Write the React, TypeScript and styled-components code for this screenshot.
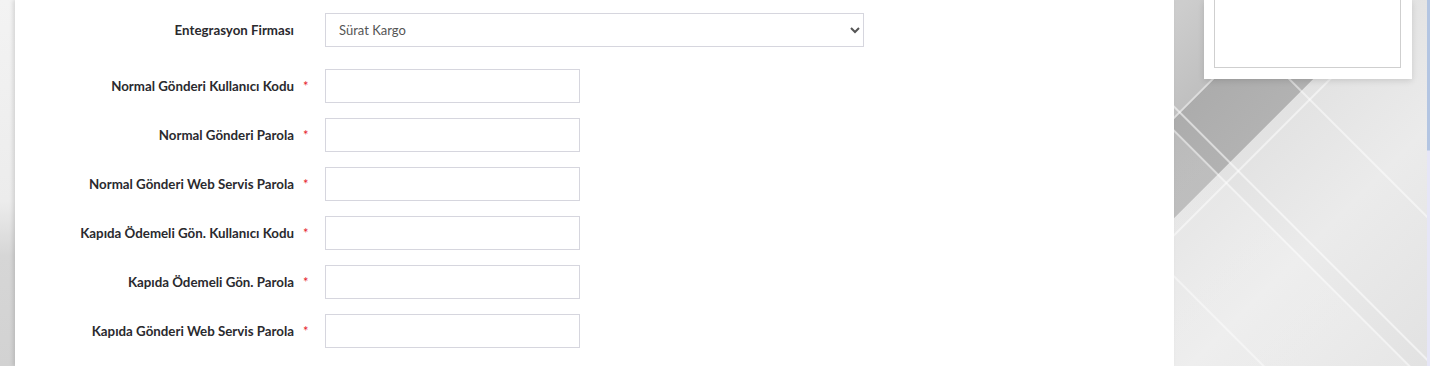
import React from "react";
import styled, { createGlobalStyle } from "styled-components";

const GlobalStyle = createGlobalStyle`
  html, body {
    margin: 0;
    padding: 0;
    overflow: hidden;
  }
  body {
    font-family: Lato, "Open Sans", sans-serif;
  }
`;

// decorative diagonal background: 135deg stripes follow x+y, 45deg stripes follow y-x
const Page = styled.div`
  display: flex;
  align-items: flex-start;
  height: 366px;
  width: 1430px;
  background-color: #e4e4e4;
  background-image:
    linear-gradient(45deg,
      transparent 892px, rgba(255,255,255,0.45) 893px, rgba(255,255,255,0.45) 894px, transparent 895px,
      transparent 995px, rgba(255,255,255,0.55) 996px, rgba(255,255,255,0.55) 997px, transparent 998px,
      transparent 1012px, rgba(255,255,255,0.55) 1013px, rgba(255,255,255,0.55) 1014px, transparent 1015px,
      transparent 1113px, rgba(255,255,255,0.5) 1114px, rgba(255,255,255,0.5) 1115px, transparent 1116px),
    linear-gradient(135deg,
      transparent 912px, rgba(255,255,255,0.6) 913px, rgba(255,255,255,0.6) 914px, transparent 915px,
      transparent 995px, rgba(255,255,255,0.5) 996px, rgba(255,255,255,0.5) 997px, transparent 998px),
    linear-gradient(45deg,
      rgba(255,255,255,0.16) 0, rgba(255,255,255,0.16) 995px, transparent 996px),
    linear-gradient(135deg,
      #d8d8d8 0, #cdcdcd 840px, #c0c0c0 912px, #acacac 913px, #b2b2b2 984px,
      #e2e2e2 985px, #ebebeb 1100px, #e0e0e0 1300px);
  background-size: 100% 100%;
`;

const Gutter = styled.div`
  flex: none;
  width: 15px;
  height: 366px;
  background: linear-gradient(180deg, #f3f3f3 0%, #ececec 55%, #d6d6d6 70%, #d2d2d2 100%);
`;

const Main = styled.main`
  flex: none;
  width: 1159px;
  height: 366px;
  background: #fff;
  box-shadow: -2px 0 4px rgba(0, 0, 0, 0.12);
  box-sizing: border-box;
  padding-top: 13px;
`;

const Form = styled.form`
  display: flex;
  flex-direction: column;
`;

const Row = styled.div<{ $gap: number }>`
  display: flex;
  align-items: center;
  margin-bottom: ${(p) => p.$gap}px;
`;

const Label = styled.label`
  width: 279px;
  text-align: right;
  font-family: Lato, "Open Sans", sans-serif;
  font-weight: 700;
  font-size: 13.3px;
  color: #2a2a2e;
`;

const Star = styled.span<{ $hidden?: boolean }>`
  width: 22px;
  padding-left: 9px;
  box-sizing: border-box;
  flex: none;
  color: #e5202b;
  font-size: 13px;
  font-family: Lato, sans-serif;
  margin-right: 9px;
  visibility: ${(p) => (p.$hidden ? "hidden" : "visible")};
`;

const TextInput = styled.input`
  box-sizing: border-box;
  width: 255px;
  height: 34px;
  border: 1px solid #d6d6de;
  border-radius: 0;
  background: #fff;
  outline: none;
`;

const Select = styled.select`
  box-sizing: border-box;
  width: 539px;
  height: 34px;
  border: 1px solid #d6d6de;
  border-radius: 0;
  background: #fff;
  padding: 0 8px 0 9px;
  font-family: Lato, "Open Sans", sans-serif;
  font-size: 13px;
  color: #555;
  outline: none;
`;

const Aside = styled.aside`
  flex: none;
  margin-left: 30px;
  width: 208px;
  height: 79px;
  box-sizing: border-box;
  padding: 0 11px 11px 10px;
  background: #fff;
  box-shadow: 0 2px 6px rgba(0, 0, 0, 0.12);
`;

const PreviewBox = styled.div`
  height: 100%;
  box-sizing: border-box;
  border: 1px solid #cfcfcf;
  border-top: none;
`;

const Scrollbar = styled.div`
  flex: none;
  margin-left: auto;
  width: 3px;
  height: 366px;
  background: linear-gradient(180deg, #b3c5e2 0, #b3c5e2 150px, #e6e6f7 151px, #e6e6f7 100%);
`;

const fields = [
  "Normal Gönderi Kullanıcı Kodu",
  "Normal Gönderi Parola",
  "Normal Gönderi Web Servis Parola",
  "Kapıda Ödemeli Gön. Kullanıcı Kodu",
  "Kapıda Ödemeli Gön. Parola",
  "Kapıda Gönderi Web Servis Parola",
];

export default function App() {
  return (
    <>
      <GlobalStyle />
      <Page>
        <Gutter />
        <Main>
          <Form>
            <Row $gap={22}>
              <Label>Entegrasyon Firması</Label>
              <Star $hidden>*</Star>
              <Select defaultValue="surat">
                <option value="surat">Sürat Kargo</option>
                <option value="yurtici">Yurtiçi Kargo</option>
                <option value="aras">Aras Kargo</option>
              </Select>
            </Row>
            {fields.map((f) => (
              <Row key={f} $gap={15}>
                <Label>{f}</Label>
                <Star>*</Star>
                <TextInput type="text" />
              </Row>
            ))}
          </Form>
        </Main>
        <Aside>
          <PreviewBox />
        </Aside>
        <Scrollbar />
      </Page>
    </>
  );
}
